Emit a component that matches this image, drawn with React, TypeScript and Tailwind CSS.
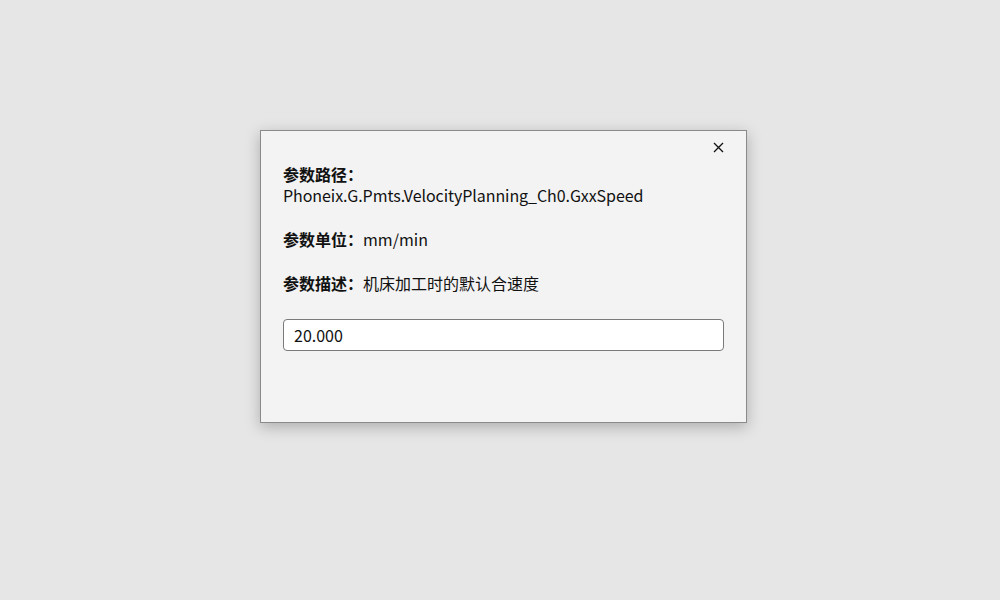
import React from "react";

export default function App() {
  return (
    <div
      className="w-[1000px] h-[600px] bg-[#e6e6e6] pt-[130px] pl-[260px]"
      style={{ fontFamily: '"Noto Sans CJK SC", "Noto Sans", sans-serif' }}
    >
      <div className="relative w-[487px] h-[293px] bg-[#f3f3f3] border border-[#8a8a8a] shadow-[0_4px_14px_rgba(0,0,0,0.25)] px-[22px] pt-[33px] text-[16px] text-[#111]">
        <button className="absolute right-[21px] top-[9px] w-[14px] h-[14px] flex items-center justify-center">
          <svg width="11" height="11" viewBox="0 0 11 11">
            <path d="M1 1L10 10M10 1L1 10" stroke="#111" strokeWidth="1.3" />
          </svg>
        </button>
        <div className="leading-[21px]">
          <div className="font-bold">参数路径：</div>
          <div className="tracking-[-0.07px]">Phoneix.G.Pmts.VelocityPlanning_Ch0.GxxSpeed</div>
        </div>
        <div className="leading-[21px] mt-[23px]">
          <span className="font-bold">参数单位：</span>mm/min
        </div>
        <div className="leading-[21px] mt-[23px]">
          <span className="font-bold">参数描述：</span>机床加工时的默认合速度
        </div>
        <input
          className="mt-[25px] w-[441px] h-[32px] bg-white border border-[#7a7a7a] rounded-[4px] px-[10px] pb-[1px] text-[16px] text-[#111] outline-none"
          defaultValue="20.000"
        />
      </div>
    </div>
  );
}
